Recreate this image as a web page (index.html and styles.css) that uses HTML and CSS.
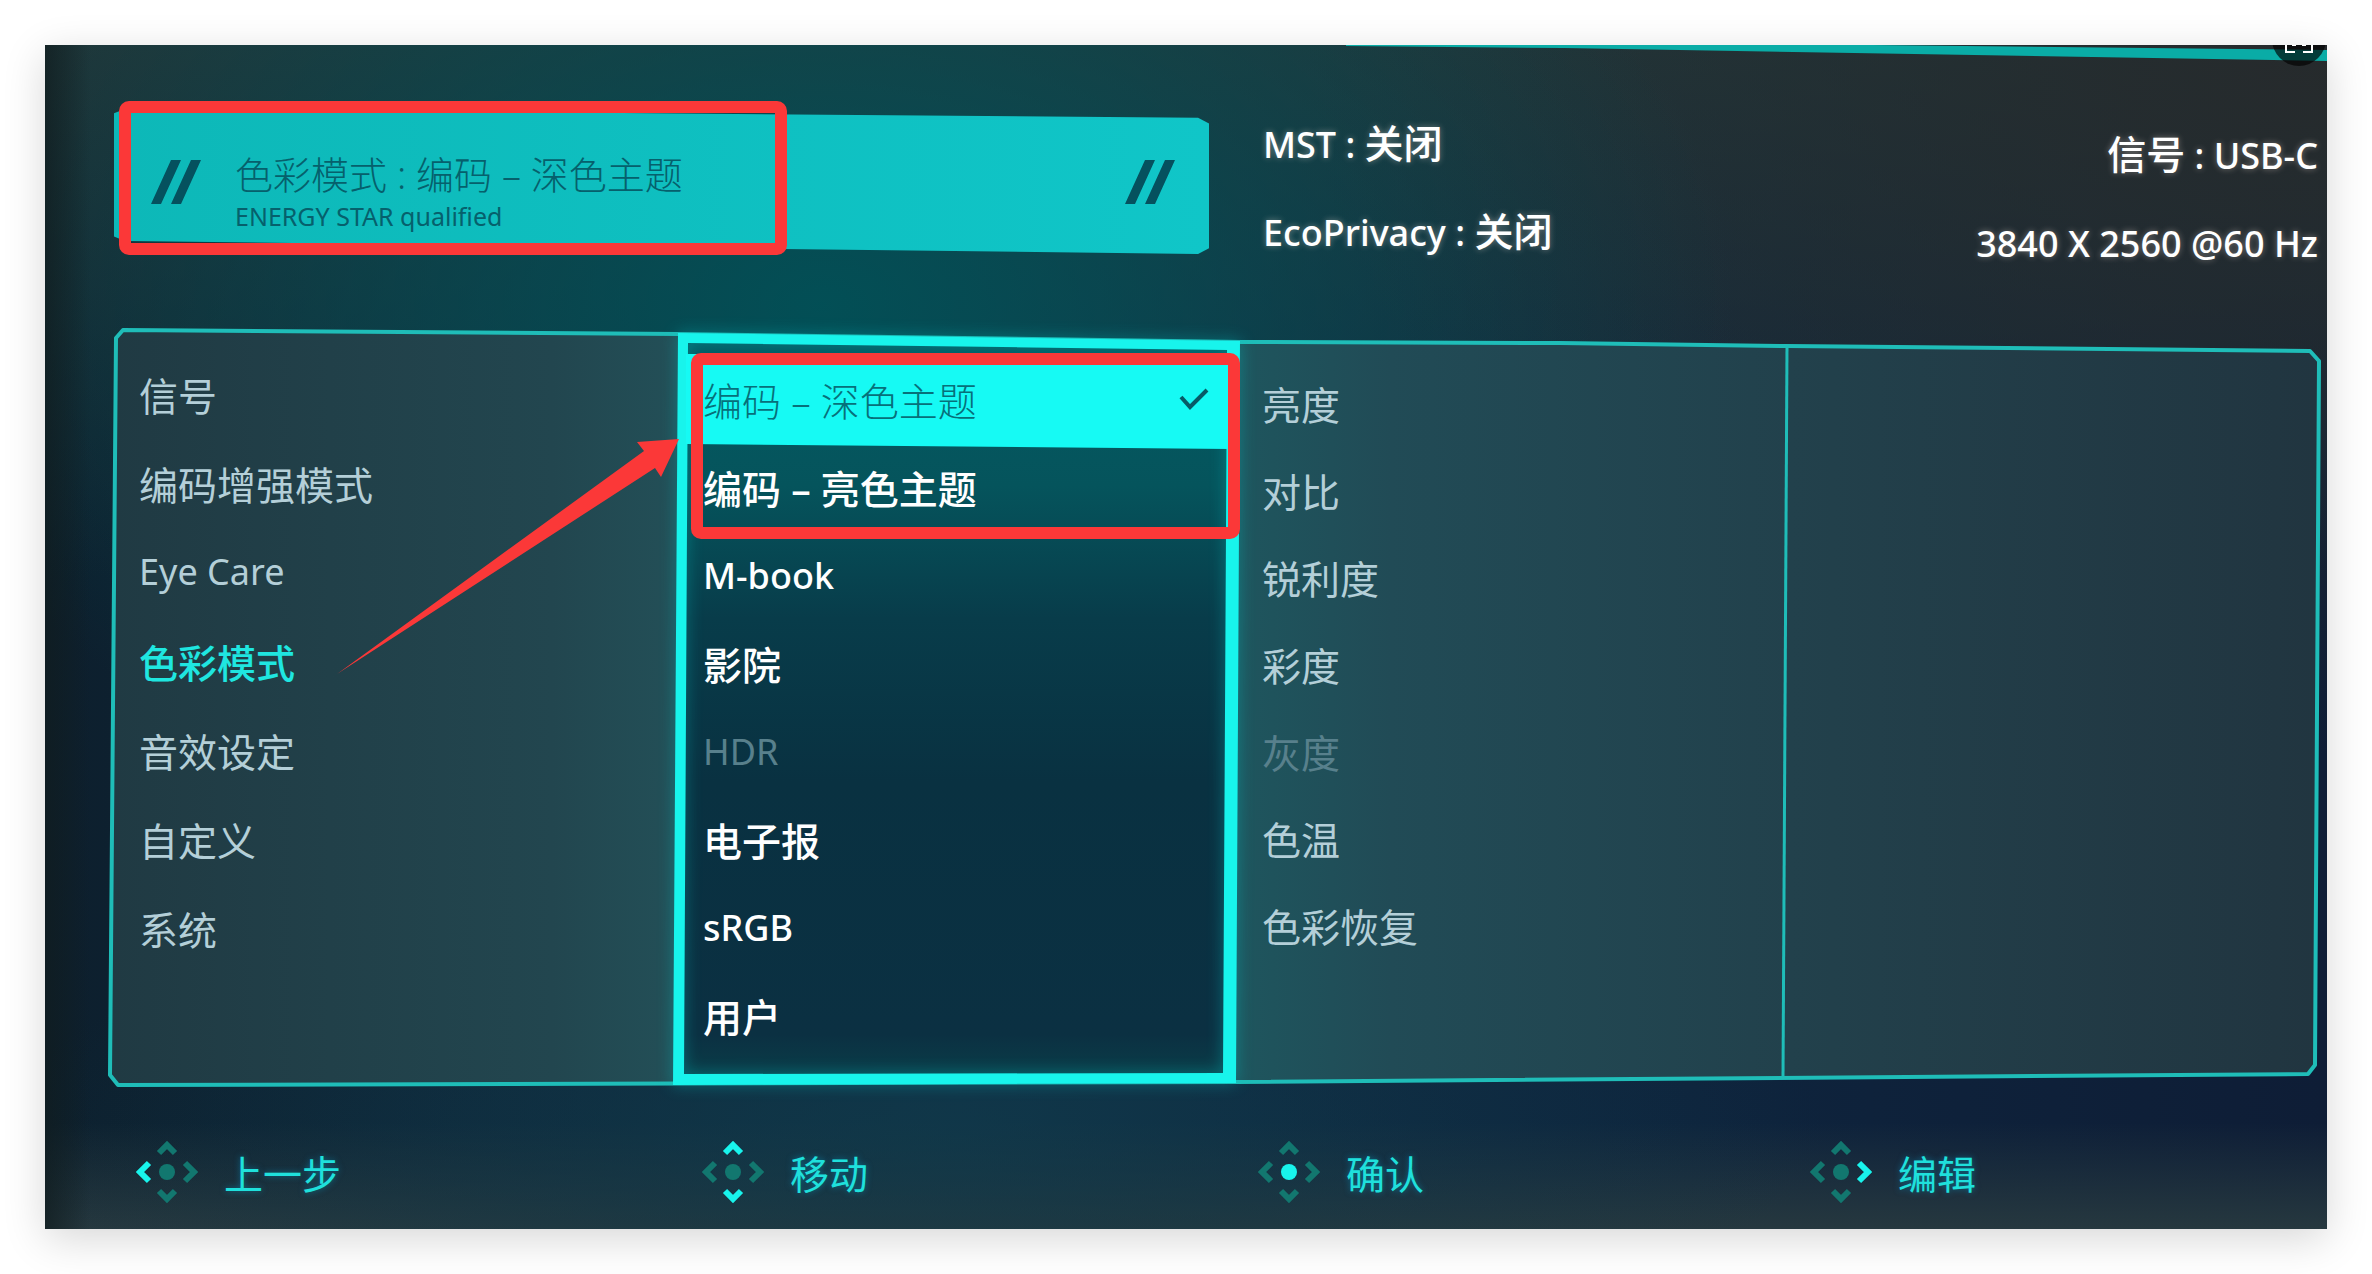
FILE: index.html
```html
<!DOCTYPE html>
<html lang="zh-CN">
  <head>
    <meta charset="UTF-8" />
    <meta name="viewport" content="width=device-width, initial-scale=1.0" />
    <title>色彩模式</title>
    <link rel="stylesheet" href="styles.css">
  </head>
  <body>
    <svg class="sprite" width="0" height="0" aria-hidden="true">
      <symbol id="slashes" viewBox="0 0 50 44">
        <path d="M20 0h10L10 44H0zM40 0h10L30 44H20z" />
      </symbol>
      <symbol id="up" viewBox="0 0 62 62"><path d="M23 12l8-8 8 8" /></symbol>
      <symbol id="down" viewBox="0 0 62 62"><path d="M23 50l8 8 8-8" /></symbol>
      <symbol id="left" viewBox="0 0 62 62"><path d="M13 22l-9 9 9 9" /></symbol>
      <symbol id="right" viewBox="0 0 62 62"><path d="M49 22l9 9-9 9" /></symbol>
    </svg>

    <main class="screen">
      <svg class="top-strip" viewBox="0 0 986 16" preserveAspectRatio="none" aria-hidden="true">
        <path d="M0 0H530L986 5V16L219 3L0 1Z" />
      </svg>
      <button class="fullscreen" aria-label="全屏">
        <svg viewBox="0 0 28 28" aria-hidden="true">
          <path d="M1 10V1h9M18 1h9v9M27 18v9h-9M10 27H1v-9" />
          <path d="M7 20h4M17 20h4" />
        </svg>
      </button>

      <header class="header">
        <div class="banner">
          <svg class="slashes"><use href="#slashes" /></svg>
          <div class="banner-text">
            <h1>色彩模式 : 编码 – 深色主题</h1>
            <p>ENERGY STAR qualified</p>
          </div>
          <svg class="slashes"><use href="#slashes" /></svg>
        </div>
        <div class="status">
          <p><span class="latin">MST : </span>关闭</p>
          <p><span class="latin">EcoPrivacy : </span>关闭</p>
        </div>
        <div class="status status-signal">
          <p>信号<span class="latin"> : USB-C</span></p>
          <p><span class="latin">3840 X 2560 @60 Hz</span></p>
        </div>
      </header>

      <section class="panel">
        <svg class="panel-frame" viewBox="0 0 2206 756" preserveAspectRatio="none" aria-hidden="true">
          <defs>
            <linearGradient id="fill" x1="0" x2="1" y1="0" y2="0">
              <stop offset="0" stop-color="#203a43" />
              <stop offset="0.2" stop-color="#22464f" />
              <stop offset="0.26" stop-color="#235058" />
              <stop offset="0.5" stop-color="#1e575f" />
              <stop offset="0.58" stop-color="#214b56" />
              <stop offset="0.78" stop-color="#22404b" />
              <stop offset="1" stop-color="#213540" />
            </linearGradient>
            <linearGradient id="active" x1="0" x2="0" y1="0" y2="1">
              <stop offset="0" stop-color="#045a62" />
              <stop offset="0.2" stop-color="#05545c" />
              <stop offset="0.38" stop-color="#083c4a" />
              <stop offset="0.6" stop-color="#093141" />
              <stop offset="0.94" stop-color="#0b3042" />
              <stop offset="1" stop-color="#0a3e49" />
            </linearGradient>
          </defs>
          <path class="frame" d="M-2 746L4 9L11 1L566 5L1128 13L1448 14L1675 17L2198 22L2207 32L2203 736L2196 745L1124 753L6 756Z" />
          <path class="divider" d="M1675 17L1671 749" />
          <path class="active-fill" d="M570 8L1122 16L1118 748L566 750Z" />
          <path class="active-edge" fill-rule="evenodd" d="M566 4L1128 12L1124 754L561 756ZM576 14L1115 21L1111 744L572 745Z" />
          <path class="active-row" d="M574 25H1118V120L574 115Z" />
        </svg>
        <ul class="menu menu-main">
          <li><button>信号</button></li>
          <li><button>编码增强模式</button></li>
          <li><button class="latin">Eye Care</button></li>
          <li><button class="current">色彩模式</button></li>
          <li><button>音效设定</button></li>
          <li><button>自定义</button></li>
          <li><button>系统</button></li>
        </ul>
        <ul class="menu menu-modes">
          <li>
            <button class="selected">
              编码 – 深色主题
              <svg class="check" viewBox="0 0 30 22" aria-hidden="true"><path d="M2 9l9 10L28 2" /></svg>
            </button>
          </li>
          <li><button>编码 – 亮色主题</button></li>
          <li><button class="latin">M-book</button></li>
          <li><button>影院</button></li>
          <li><button class="latin" disabled>HDR</button></li>
          <li><button>电子报</button></li>
          <li><button class="latin">sRGB</button></li>
          <li><button>用户</button></li>
        </ul>
        <ul class="menu menu-settings">
          <li><button>亮度</button></li>
          <li><button>对比</button></li>
          <li><button>锐利度</button></li>
          <li><button>彩度</button></li>
          <li><button disabled>灰度</button></li>
          <li><button>色温</button></li>
          <li><button>色彩恢复</button></li>
        </ul>
      </section>

      <footer class="keys">
        <button class="key">
          <svg class="pad" viewBox="0 0 62 62" aria-hidden="true">
            <use href="#up" /><use href="#down" /><use href="#left" class="on" /><use href="#right" />
            <circle cx="31" cy="31" r="8" />
          </svg>
          上一步
        </button>
        <button class="key">
          <svg class="pad" viewBox="0 0 62 62" aria-hidden="true">
            <use href="#up" class="on" /><use href="#down" class="on" /><use href="#left" /><use href="#right" />
            <circle cx="31" cy="31" r="8" />
          </svg>
          移动
        </button>
        <button class="key">
          <svg class="pad" viewBox="0 0 62 62" aria-hidden="true">
            <use href="#up" /><use href="#down" /><use href="#left" /><use href="#right" />
            <circle class="on" cx="31" cy="31" r="8" />
          </svg>
          确认
        </button>
        <button class="key">
          <svg class="pad" viewBox="0 0 62 62" aria-hidden="true">
            <use href="#up" /><use href="#down" /><use href="#left" /><use href="#right" class="on" />
            <circle cx="31" cy="31" r="8" />
          </svg>
          编辑
        </button>
      </footer>

      <!-- red highlight boxes and arrow -->
      <svg class="marks" viewBox="0 0 2282 1184" preserveAspectRatio="none" aria-hidden="true">
        <rect x="80" y="62" width="656" height="142" rx="4" />
        <rect x="652" y="314" width="537" height="174" rx="4" />
        <path d="M634 394L592 397L599 406L292 629L610 423L616 432Z" />
      </svg>
    </main>
  </body>
</html>
```

FILE: styles.css
```css
* {
  box-sizing: border-box;
}
body {
  margin: 0;
  padding: 45px;
  background-color: #fff;
  font-family: "Noto Sans", "Noto Sans CJK SC", sans-serif;
  font-size: 39px;
}
h1,
p,
ul {
  margin: 0;
  padding: 0;
}
button {
  padding: 0;
  border: none;
  background: none;
  color: inherit;
  font: inherit;
  text-align: left;
  cursor: pointer;
}
.sprite {
  position: absolute;
}
.latin {
  font-size: 36px;
}

.screen {
  position: relative;
  display: flex;
  flex-direction: column;
  min-height: calc(100vh - 90px);
  padding: 56px 9px 0 67px;
  overflow: hidden;
  background:
    linear-gradient(90deg, rgba(16, 28, 30, 0.7), rgba(10, 24, 34, 0) 2%),
    radial-gradient(ellipse 40% 50% at 34% 22%, rgba(0, 82, 88, 0.9), rgba(0, 82, 88, 0)),
    radial-gradient(ellipse 45% 60% at 100% 0%, #262a2c, rgba(36, 41, 43, 0)),
    radial-gradient(ellipse 40% 22% at 38% 92%, rgba(16, 58, 72, 0.7), rgba(16, 58, 72, 0)),
    linear-gradient(0deg, #26383f, rgba(32, 48, 60, 0) 9%),
    linear-gradient(180deg, rgba(34, 56, 58, 0.9), rgba(10, 28, 42, 0) 45%),
    linear-gradient(90deg, #0d1f2d, #10304a 40%, #0e2740 60%, #0e1d36);
  box-shadow: 0 10px 40px rgba(0, 0, 0, 0.16);
}
.top-strip {
  position: absolute;
  top: 0;
  right: 0;
  width: 43%;
  height: 16px;
  fill: #0aaca6;
}
.fullscreen {
  position: absolute;
  top: -33px;
  right: 1px;
  display: flex;
  align-items: center;
  justify-content: center;
  width: 54px;
  height: 54px;
  border-radius: 50%;
  background-color: rgba(0, 0, 0, 0.65);
}
.fullscreen svg {
  width: 28px;
  height: 28px;
  fill: none;
  stroke: #fff;
  stroke-width: 2;
}

/* header */
.header {
  display: grid;
  grid-template-columns: 1122fr 552fr 532fr;
  height: 187px;
}
.banner {
  display: flex;
  align-items: center;
  height: 145px;
  margin: 8px 25px 0 2px;
  padding: 0 34px 0 37px;
  background: linear-gradient(90deg, #0db8b8, #10c6c8);
  clip-path: polygon(0 3%, 1% 0, 99% 6%, 100% 10%, 100% 96%, 99% 100%, 1% 91%, 0 88%);
  color: #06606c;
}
.banner-text {
  flex: 1;
  padding: 20px 0 0 34px;
}
.banner h1 {
  font-size: 38px;
  font-weight: 300;
  line-height: 48px;
}
.banner p {
  font-size: 25px;
  line-height: 36px;
}
.slashes {
  width: 50px;
  height: 44px;
  fill: #05515e;
}
.status {
  padding-left: 29px;
  color: #fff;
  font-weight: 500;
  line-height: 84px;
  text-shadow: 0 0 6px rgba(255, 235, 225, 0.4);
  white-space: nowrap;
}
.status p {
  height: 88px;
}
.status-signal {
  padding: 11px 0 0;
  text-align: right;
}

/* menu panel */
.panel {
  position: relative;
  display: grid;
  grid-template-columns: 566fr 556fr 552fr 532fr;
  height: 756px;
  margin-top: 41px;
}
.panel-frame {
  position: absolute;
  width: 100%;
  height: 100%;
  overflow: visible;
}
.frame {
  fill: url(#fill);
  stroke: #1fbdb8;
  stroke-width: 4;
  stroke-linejoin: round;
}
.divider {
  fill: none;
  stroke: #1fbdb8;
  stroke-width: 3;
}
.active-fill {
  fill: url(#active);
}
.active-edge {
  fill: #18f4ec;
  filter: drop-shadow(0 0 8px rgba(0, 200, 200, 0.4));
}
.active-row {
  fill: #16faf4;
}
.menu {
  position: relative;
  color: #b4cfd8;
  list-style: none;
}
.menu button {
  display: flex;
  align-items: center;
  width: 100%;
  height: 88px;
}
.menu button:disabled {
  color: #58808c;
  font-weight: 400;
  text-shadow: none;
  cursor: default;
}
.menu-main {
  padding: 20px 0 0 27px;
}
.menu-main button {
  height: 89px;
}
.menu-modes {
  padding: 26px 25px 0 25px;
  color: #fff;
  font-weight: 500;
  text-shadow: 0 0 6px rgba(255, 225, 225, 0.4);
}
.menu-settings {
  padding: 30px 0 0 28px;
}
.menu-settings button {
  height: 87px;
}
.menu .current {
  color: #1fe6e0;
  font-weight: 500;
}
.menu .selected {
  justify-content: space-between;
  color: #07707a;
  font-weight: 300;
  text-shadow: none;
}
.check {
  width: 30px;
  height: 22px;
  fill: none;
  stroke: #075a66;
  stroke-width: 4;
}

/* key hints */
.keys {
  display: grid;
  grid-template-columns: 566fr 556fr 552fr 532fr;
  padding: 56px 0 20px;
}
.key {
  display: flex;
  align-items: center;
  gap: 26px;
  height: 62px;
  padding-left: 24px;
  color: #1fe0dc;
  text-shadow: 0 0 6px rgba(0, 170, 220, 0.5);
}
.pad {
  width: 62px;
  height: 62px;
  fill: none;
  stroke: #12776f;
  stroke-width: 6;
}
.pad circle {
  fill: #12776f;
  stroke: none;
}
.pad .on {
  stroke: #18f4ec;
}
.pad circle.on {
  fill: #18f4ec;
  stroke: none;
}

.marks {
  position: absolute;
  top: 0;
  left: 0;
  width: 100%;
  height: 100%;
  pointer-events: none;
}
.marks rect {
  fill: none;
  stroke: #fb3838;
  stroke-width: 12;
}
.marks path {
  fill: #fb3838;
}
```
